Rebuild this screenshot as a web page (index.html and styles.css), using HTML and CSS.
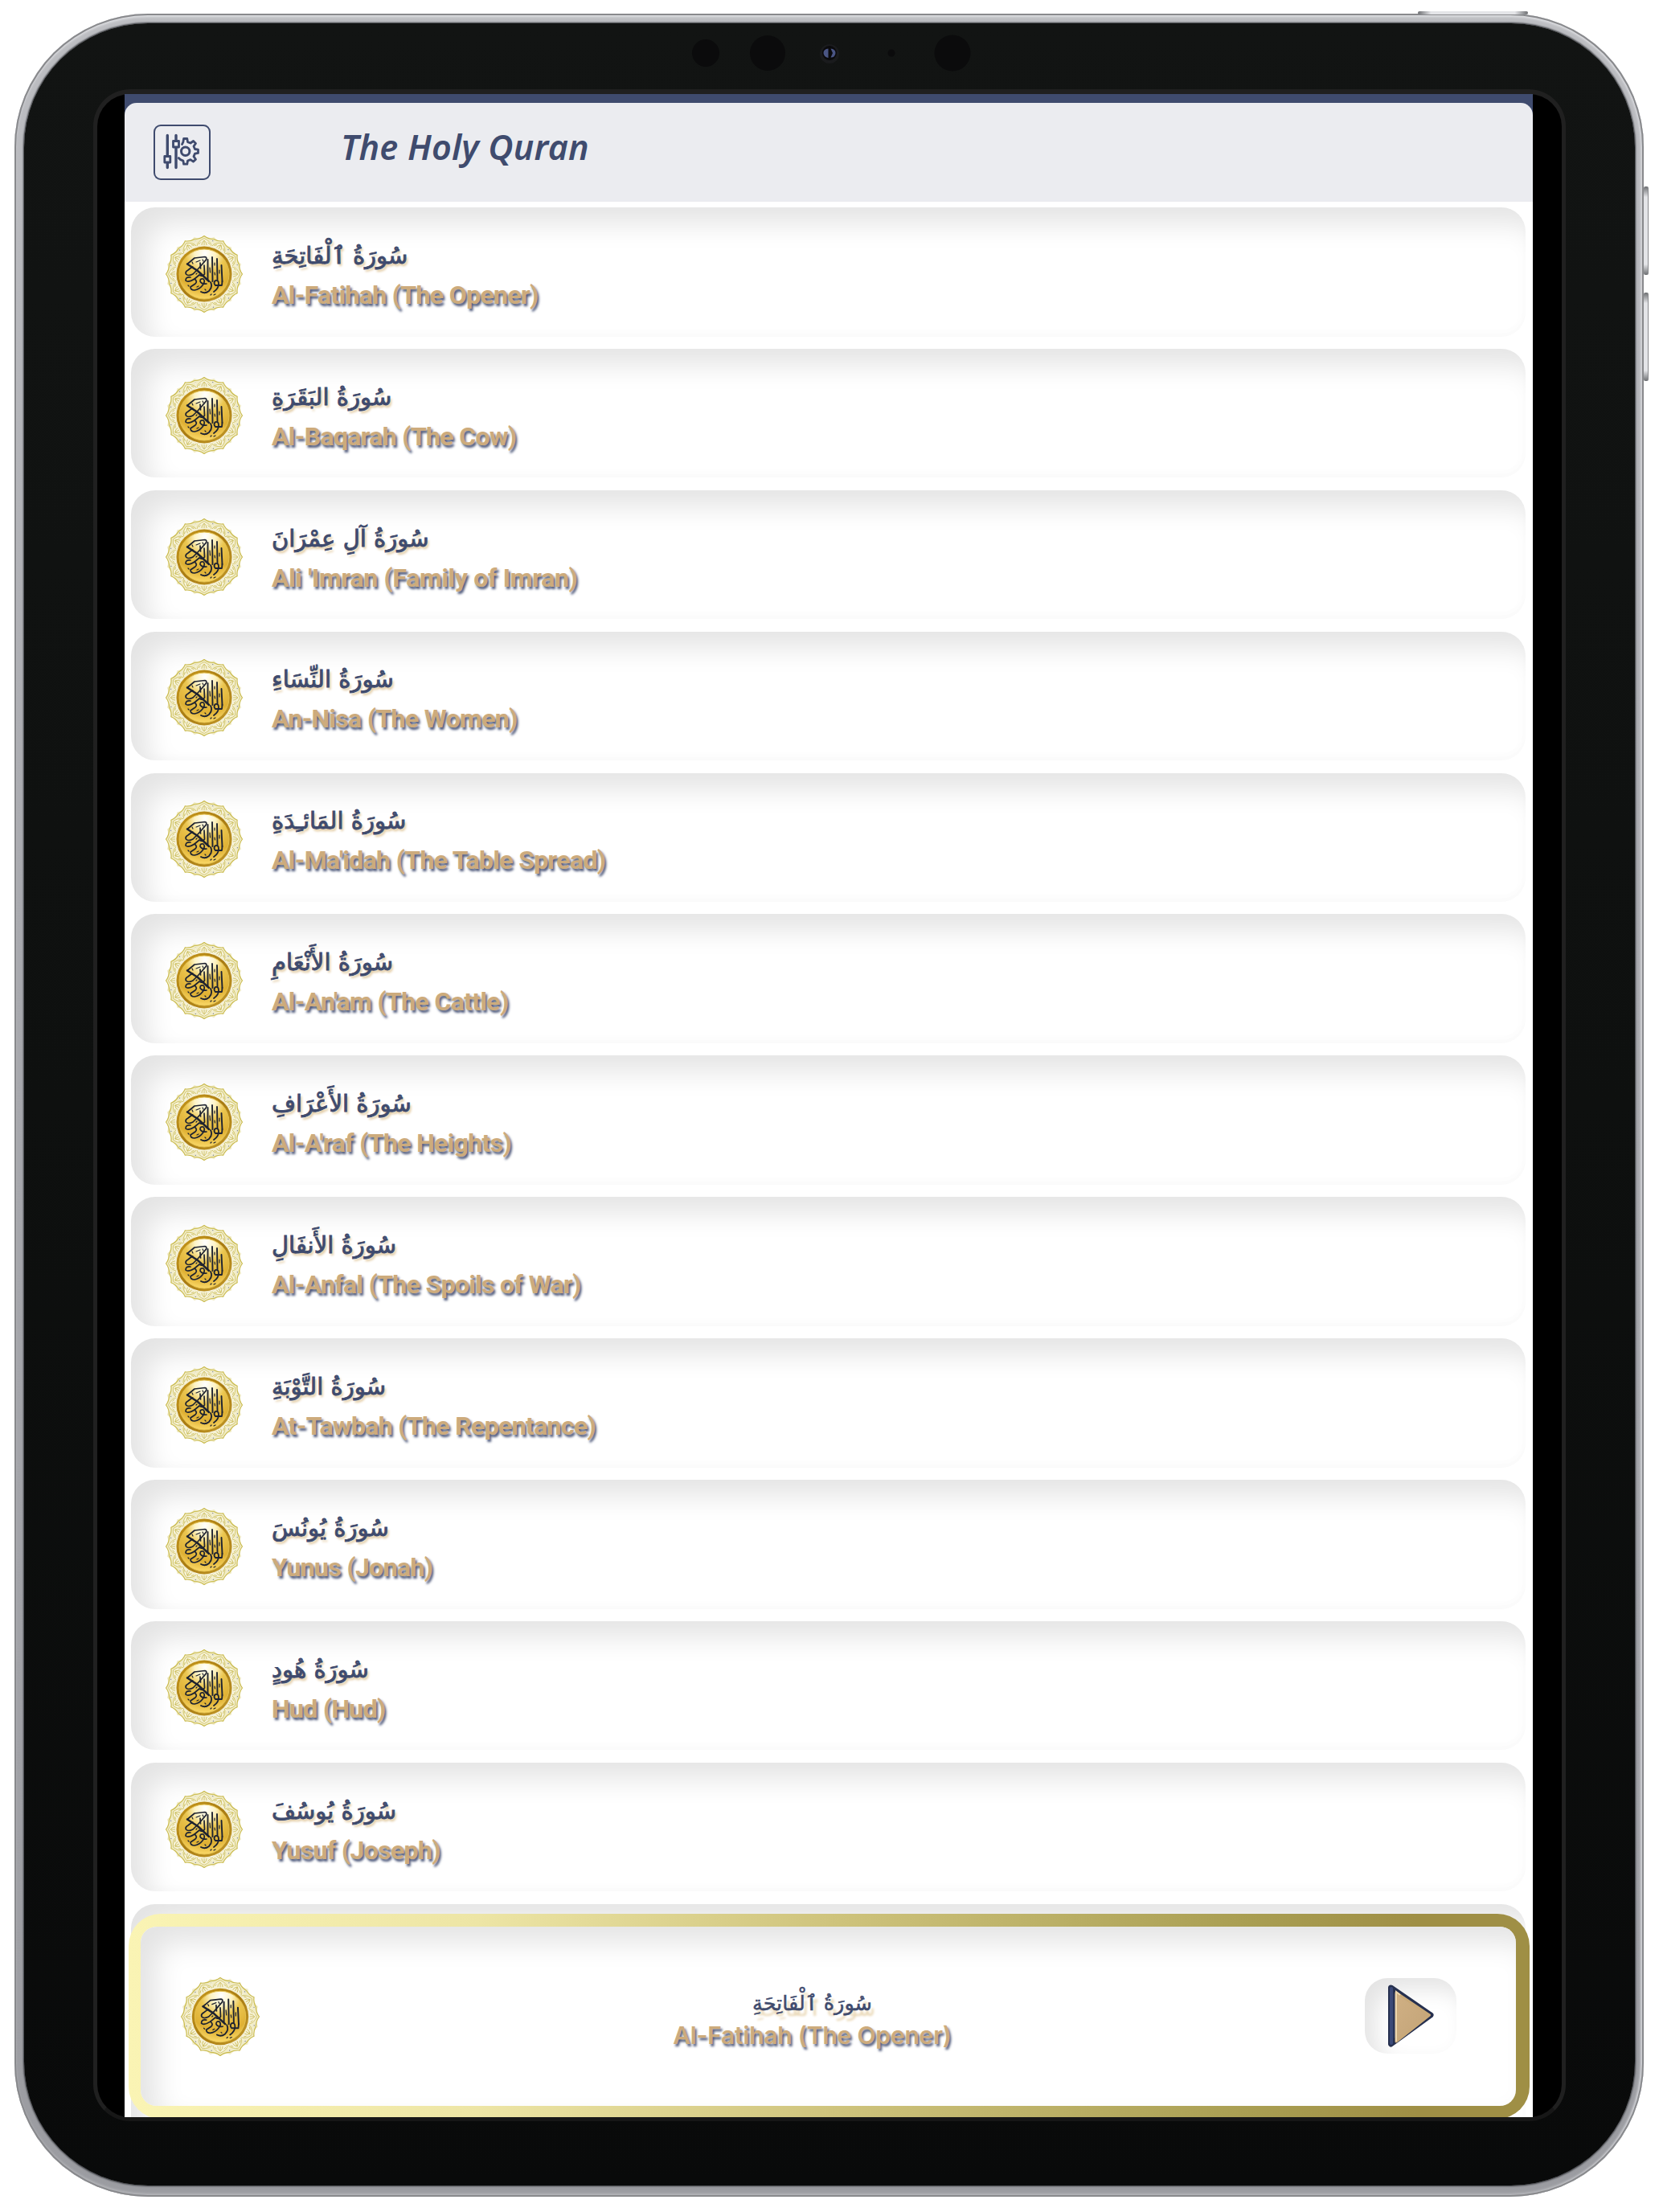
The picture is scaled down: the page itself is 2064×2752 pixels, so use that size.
FILE: index.html
```
<!DOCTYPE html>
<html lang="en">
<head>
  <meta charset="utf-8">
  <title>The Holy Quran</title>
  <link rel="stylesheet" href="styles.css">
</head>
<body>
  <!-- Shared artwork -->
  <svg class="sprite" aria-hidden="true">
    <defs>
      <linearGradient id="goldRim" x1="0" y1="0" x2="1" y2="1">
        <stop offset="0" stop-color="#c99a1c"/>
        <stop offset="0.5" stop-color="#a97c12"/>
        <stop offset="1" stop-color="#c49a2a"/>
      </linearGradient>
      <radialGradient id="goldFace" cx="0.52" cy="0.08" r="0.95">
        <stop offset="0" stop-color="#ffffff"/>
        <stop offset="0.22" stop-color="#fdf3c4"/>
        <stop offset="0.42" stop-color="#ebc650"/>
        <stop offset="0.75" stop-color="#dfb033"/>
        <stop offset="1" stop-color="#ffdf70"/>
      </radialGradient>
      <linearGradient id="playFace" x1="0" y1="0" x2="1" y2="1">
        <stop offset="0" stop-color="#d0b084"/>
        <stop offset="1" stop-color="#c2a377"/>
      </linearGradient>
      <g id="petal">
        <path d="M35.600 1.800 Q42 5 48 0 Q54 5 60.400 1.800 L57 14 H39 Z" fill="#f1ecc8" stroke="none"/>
        <path d="M36 4.500 Q43 4.500 48 0.500 Q53 4.500 60 4.500" fill="none" stroke="#c9ba4c" stroke-width="1.100"/>
        <path d="M39 13 Q40 7 48 3.600 Q56 7 57 13" fill="#f6f2d8" stroke="#cfc160" stroke-width="0.8"/>
        <path d="M45 12 Q44.500 9 48 6 Q51.500 9 51 12 M48 6.500 V12 M41 11 L43.500 8.500 M55 11 L52.500 8.500" fill="none" stroke="#c9ba55" stroke-width="0.8"/>
        <circle cx="36.600" cy="6.800" r="0.7" fill="#7d8494"/>
      </g>
      <symbol id="medallion" viewBox="0 0 96 96">
        <use href="#petal"/>
        <use href="#petal" transform="rotate(30 48 48)"/>
        <use href="#petal" transform="rotate(60 48 48)"/>
        <use href="#petal" transform="rotate(90 48 48)"/>
        <use href="#petal" transform="rotate(120 48 48)"/>
        <use href="#petal" transform="rotate(150 48 48)"/>
        <use href="#petal" transform="rotate(180 48 48)"/>
        <use href="#petal" transform="rotate(210 48 48)"/>
        <use href="#petal" transform="rotate(240 48 48)"/>
        <use href="#petal" transform="rotate(270 48 48)"/>
        <use href="#petal" transform="rotate(300 48 48)"/>
        <use href="#petal" transform="rotate(330 48 48)"/>
        <circle cx="48" cy="48" r="34.500" fill="url(#goldRim)"/>
        <circle cx="48" cy="48" r="31" fill="url(#goldFace)" stroke="#e3c050" stroke-width="1"/>
        <g fill="none" stroke="#1d2230" stroke-linecap="round" stroke-linejoin="round">
          <path d="M27 35.500 L40 44 L54 57" stroke-width="2.500"/>
          <path d="M27 35.500 L36 28 L49 26.500 Q51.500 27 50.500 30 L41 41 L34 48 Q28 51 25.500 48 Q24 45 28 43 L33 39" stroke-width="1.700"/>
          <path d="M52.500 30 V55 M58 27 L58.500 57 M64 29 L64.500 55 M69.500 37 L70.500 57" stroke-width="1.900"/>
          <path d="M43 34 L43.500 41 M48 37 L48.500 48 Q46 52 42 49 L36 54 Q28 59 25 56 Q25 51 31 52" stroke-width="1.700"/>
          <path d="M36 54 Q40 57 37 60 L31 64 Q31 68 36 68 Q42 67 46 62 Q50 57 47 54 Q43 53 43 57 Q45 61 51 60" stroke-width="1.700"/>
          <path d="M70.500 57 L70 62 L62 62 Q59 59 62 56 Q66 55 66 60 Q66 66 60 70 M56 58 Q59 64 54 69 Q49 73 44 70" stroke-width="1.800"/>
          <path d="M38 33 L43 31 M32 40 L34 39 M38 48 L39 47 M28 62 L29 63 M49 67 L50 68 M56 74 L57 73 M60 74 L62 73 M39 64 L41 63 M61 34 L61 37 M67 43 L67 47 M55 40 L55.500 46 M33 33 L34 35 M46 30 L47 32 M61 46 L61.500 49" stroke-width="1.200"/>
        </g>
      </symbol>
    </defs>
  </svg>

  <div class="tablet">
    <span class="hw-button power"></span>
    <span class="hw-button volume-up"></span>
    <span class="hw-button volume-down"></span>
    <div class="bezel">
      <svg class="cameras" width="360" height="82" viewBox="0 0 360 82" aria-hidden="true">
        <circle cx="18" cy="37" r="17" fill="#0b0b0c"/>
        <circle cx="95" cy="37" r="22" fill="#0b0b0c"/>
        <circle cx="172" cy="38" r="12" fill="#1a1b1d"/>
        <circle cx="172" cy="37" r="9" fill="#0a0a0c"/>
        <path d="M170.500 31.500 Q164.500 32 164.500 37 Q165 42 170.500 43 Z M173.500 31.500 Q179.500 32 179.500 37 Q179 42.500 173.500 42.500 L176 37 Z" fill="#4a5584"/>
        <circle cx="249" cy="37" r="4.500" fill="#0b0b0c"/>
        <circle cx="325" cy="37" r="22.500" fill="#0b0b0c"/>
      </svg>
      <div class="screen">
        <div class="app">
          <header class="header">
            <button class="settings" aria-label="Settings">
              <svg width="71" height="69" viewBox="0 0 71 69" fill="none" stroke="#3f4b6e" stroke-width="3.400" stroke-linecap="round" stroke-linejoin="round">
                <path d="M17.300 13.500 V39 M17.300 47.500 V53.500 M28 13.500 V20 M28 29 V53.500"/>
                <rect x="13.800" y="39.500" width="7" height="7.500" stroke-width="2.800"/>
                <rect x="24.500" y="20.500" width="7" height="7.500" stroke-width="2.800"/>
                <circle cx="39.700" cy="33.300" r="5.200" stroke-width="3"/>
                <path d="M35.500 24.500 L36.900 21.600 L37.600 17.500 H41.800 L42.500 21.600 L46 23 L49.600 20.500 L52.500 23.400 L50 27 L51.500 30.500 L55.500 31.200 V35.400 L51.500 36.100 L50 39.600 L52.500 43.200 L49.600 46.100 L46 43.600 L42.500 45 L41.800 49.200 H37.600 L36.900 45 L33.600 43.600 L31.300 41.600" stroke-width="2.800"/>
              </svg>
            </button>
            <h1 class="title">The Holy Quran</h1>
          </header>

          <!-- Surah list -->
          <ul class="surah-list">
            <li class="surah">
              <svg class="medallion"><use href="#medallion"/></svg>
              <div class="names">
                <p class="arabic" lang="ar" dir="rtl">سُورَةُ ٱلْفَاتِحَةِ</p>
                <p class="english">Al-Fatihah (The Opener)</p>
              </div>
            </li>
            <li class="surah">
              <svg class="medallion"><use href="#medallion"/></svg>
              <div class="names">
                <p class="arabic" lang="ar" dir="rtl">سُورَةُ البَقَرَةِ</p>
                <p class="english">Al-Baqarah (The Cow)</p>
              </div>
            </li>
            <li class="surah">
              <svg class="medallion"><use href="#medallion"/></svg>
              <div class="names">
                <p class="arabic" lang="ar" dir="rtl">سُورَةُ آلِ عِمْرَانَ</p>
                <p class="english wide">Ali 'Imran (Family of Imran)</p>
              </div>
            </li>
            <li class="surah">
              <svg class="medallion"><use href="#medallion"/></svg>
              <div class="names">
                <p class="arabic" lang="ar" dir="rtl">سُورَةُ النِّسَاءِ</p>
                <p class="english">An-Nisa (The Women)</p>
              </div>
            </li>
            <li class="surah">
              <svg class="medallion"><use href="#medallion"/></svg>
              <div class="names">
                <p class="arabic" lang="ar" dir="rtl">سُورَةُ المَائـِدَةِ</p>
                <p class="english">Al-Ma'idah (The Table Spread)</p>
              </div>
            </li>
            <li class="surah">
              <svg class="medallion"><use href="#medallion"/></svg>
              <div class="names">
                <p class="arabic" lang="ar" dir="rtl">سُورَةُ الأَنْعَامِ</p>
                <p class="english">Al-An'am (The Cattle)</p>
              </div>
            </li>
            <li class="surah">
              <svg class="medallion"><use href="#medallion"/></svg>
              <div class="names">
                <p class="arabic" lang="ar" dir="rtl">سُورَةُ الأَعْرَافِ</p>
                <p class="english">Al-A'raf (The Heights)</p>
              </div>
            </li>
            <li class="surah">
              <svg class="medallion"><use href="#medallion"/></svg>
              <div class="names">
                <p class="arabic" lang="ar" dir="rtl">سُورَةُ الأَنفَالِ</p>
                <p class="english">Al-Anfal (The Spoils of War)</p>
              </div>
            </li>
            <li class="surah">
              <svg class="medallion"><use href="#medallion"/></svg>
              <div class="names">
                <p class="arabic" lang="ar" dir="rtl">سُورَةُ التَّوْبَةِ</p>
                <p class="english">At-Tawbah (The Repentance)</p>
              </div>
            </li>
            <li class="surah">
              <svg class="medallion"><use href="#medallion"/></svg>
              <div class="names">
                <p class="arabic" lang="ar" dir="rtl">سُورَةُ يُونُسَ</p>
                <p class="english">Yunus (Jonah)</p>
              </div>
            </li>
            <li class="surah">
              <svg class="medallion"><use href="#medallion"/></svg>
              <div class="names">
                <p class="arabic" lang="ar" dir="rtl">سُورَةُ هُودٍ</p>
                <p class="english">Hud (Hud)</p>
              </div>
            </li>
            <li class="surah">
              <svg class="medallion"><use href="#medallion"/></svg>
              <div class="names">
                <p class="arabic" lang="ar" dir="rtl">سُورَةُ يُوسُفَ</p>
                <p class="english">Yusuf (Joseph)</p>
              </div>
            </li>
            <li class="surah"></li>
            <li class="surah"></li>
          </ul>

          <!-- Player, floats over the list -->
          <div class="player">
            <div class="player-body">
              <svg class="medallion"><use href="#medallion"/></svg>
              <div class="names">
                <p class="arabic" lang="ar" dir="rtl">سُورَةُ ٱلْفَاتِحَةِ</p>
                <p class="english">Al-Fatihah (The Opener)</p>
              </div>
              <button class="play" aria-label="Play">
                <svg width="114" height="94" viewBox="0 0 114 94">
                  <path d="M32.500 12 L82 46 L32.500 82 Z" fill="#2f3c66" stroke="#26304f" stroke-width="7" stroke-linejoin="round"/>
                  <path d="M33 13 V81" stroke="#3c4a78" stroke-width="4" stroke-linecap="round"/>
                  <path d="M39 18 L80.500 46 L39 79 Z" fill="url(#playFace)" stroke="#c9a978" stroke-width="3" stroke-linejoin="round"/>
                  <path d="M39 79 V17 L44 21" fill="none" stroke="#ecd6ae" stroke-width="2"/>
                </svg>
              </button>
            </div>
          </div>
        </div>
      </div>
    </div>
  </div>
</body>
</html>
```
FILE: styles.css
```
* {
  box-sizing: border-box;
}
body {
  margin: 0;
  padding: 17px 19px 19px 18px;
  background-color: #fff;
  font-family: Roboto, sans-serif;
  overflow: hidden;
}
p, h1, ul {
  margin: 0;
  padding: 0;
}
button {
  padding: 0;
  border: none;
  background: none;
}
.sprite {
  position: absolute;
  width: 0;
  height: 0;
}

/* Tablet */
.tablet {
  position: relative;
  width: 2027px;
  height: 2716px;
  padding: 12px 11px 14px 12px;
  border-radius: 166px;
  background: linear-gradient(#bdbec2, #a9aaaf 40%, #9b9ca1);
  box-shadow: inset 0 0 0 2px #88898c, inset 0 3px 3px 1px #dedfe2, inset -4px 0 3px #d4d5d9, inset 0 -4px 3px #b4b5b9;
}
.bezel {
  height: 2690px;
  padding: 0 86px;
  border-radius: 154px;
  background: linear-gradient(#121413, #0e100f 50%, #090a0a);
  box-shadow: 0 0 2px 1px #33353a;
}
.hw-button {
  position: absolute;
  background: linear-gradient(#6d6f72, #e4e5e8 12%, #e4e5e8 88%, #6d6f72);
  border-radius: 2px;
}
.power {
  top: -3px;
  left: 1746px;
  width: 137px;
  height: 4px;
  background: linear-gradient(90deg, #6d6f72, #e4e5e8 12%, #e4e5e8 88%, #6d6f72);
}
.volume-up,
.volume-down {
  right: -6px;
  width: 6px;
  height: 110px;
  border-right: 1px solid #88898c;
}
.volume-up {
  top: 215px;
}
.volume-down {
  top: 347px;
}
.cameras {
  display: block;
  margin-left: 744px;
}
.screen {
  display: flex;
  width: 1832px;
  height: 2528px;
  padding-left: 34px;
  border: 5px solid #202020;
  border-top-width: 6px;
  border-bottom-color: #171717;
  border-radius: 46px;
  background-color: #000;
}

/* App */
.app {
  position: relative;
  width: 1752px;
  height: 2517px;
  padding-top: 11px;
  overflow: hidden;
  background: linear-gradient(#3f4b6e 40px, #fff 40px);
}
.header {
  display: flex;
  align-items: flex-start;
  height: 123px;
  padding: 27px 36px 0;
  border-radius: 15px 15px 0 0;
  background-color: #ebecf0;
}
.settings {
  display: flex;
  width: 71px;
  height: 69px;
  border-radius: 9px;
  box-shadow: inset 0 0 0 2px #3f4b6e;
}
.title {
  margin: -1px 0 0 162px;
  color: #3f4b6e;
  font-family: "Noto Sans", sans-serif;
  font-size: 43px;
  font-style: italic;
  font-weight: 600;
  letter-spacing: 0.2px;
  line-height: 57px;
}

/* Surah list */
.surah-list {
  display: flex;
  flex-direction: column;
  gap: 15.4px;
  padding: 7px 9px 0 8px;
  list-style: none;
  background-color: #fff;
}
.surah {
  display: flex;
  flex-shrink: 0;
  align-items: center;
  gap: 36px;
  height: 160.5px;
  padding: 5px 43px 0;
  border-radius: 30px;
  background-color: #fff;
  box-shadow: inset 20px 20px 34px #e4e4e4, inset -1px -6px 8px #fdfdfd;
}
.medallion {
  flex-shrink: 0;
  width: 96px;
  height: 96px;
}
.arabic {
  color: #3f4b6e;
  font-family: "DejaVu Sans", sans-serif;
  font-size: 29px;
  line-height: 44px;
  text-align: left;
  text-shadow: 2px 3px 3px #e0c79c;
  -webkit-text-stroke: 0.9px #3f4b6e;
}
.english {
  margin-top: 8px;
  color: #cdab7c;
  font-size: 32px;
  font-weight: bold;
  letter-spacing: -0.65px;
  line-height: 38px;
  text-shadow: 2px 3px 3px #4d587a;
}
.wide {
  letter-spacing: -0.3px;
}

/* Player */
.player {
  position: absolute;
  left: 5px;
  bottom: -2px;
  width: 1743px;
  height: 255px;
  padding: 16px 17px 16px 15px;
  border-radius: 40px;
  background: linear-gradient(90deg, #faf4b4, #ede5a5 25%, #cfc47d 50%, #a99e52 80%, #9f8f45 92%);
}
.player-body {
  display: flex;
  align-items: center;
  justify-content: space-between;
  height: 223px;
  padding: 0 74px 0 50px;
  border-radius: 20px;
  background-color: #fff;
  box-shadow: inset 20px 20px 34px #e4e4e4;
}
.player .medallion {
  width: 98px;
  height: 98px;
}
.player .names {
  padding-top: 10px;
}
.player .arabic {
  font-size: 25.5px;
  line-height: 32px;
  text-align: center;
  text-shadow: 4px 7px 3px #e8d5b0;
  -webkit-text-stroke: 0.5px #3f4b6e;
}
.player .english {
  margin-top: 4px;
  font-family: Inter, sans-serif;
  font-size: 30px;
  font-weight: 600;
  letter-spacing: -0.2px;
  line-height: 40px;
}
.play {
  display: flex;
  width: 114px;
  height: 94px;
  margin-top: -2px;
  border-radius: 28px;
  box-shadow: inset 14px 14px 28px #e4e4e4;
}
```
